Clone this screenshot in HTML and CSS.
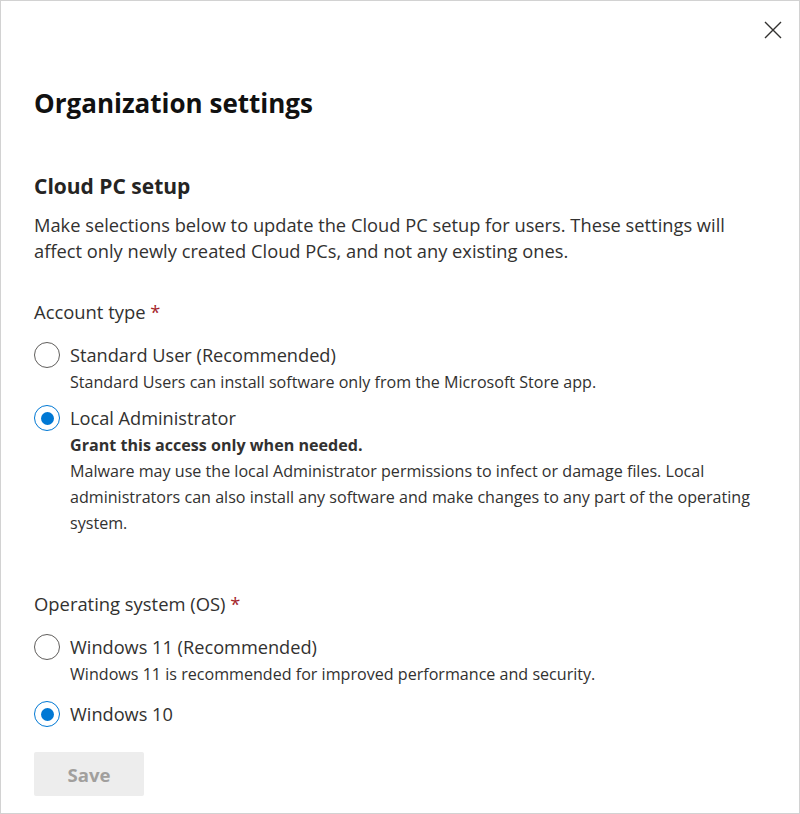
FILE: index.html
```html
<!DOCTYPE html>
<html lang="en">
<head>
<meta charset="utf-8">
<title>Organization settings</title>
<link rel="stylesheet" href="styles.css">
</head>
<body>
<div class="panel">
  <button class="close" aria-label="Close">
    <svg width="18" height="18" viewBox="0 0 18 18"><path d="M1 1 L17 17 M17 1 L1 17" stroke="#323130" stroke-width="1.4" fill="none"/></svg>
  </button>
  <h1 class="title">Organization settings</h1>
  <h2 class="section-title">Cloud PC setup</h2>
  <p class="intro">Make selections below to update the Cloud PC setup for users. These settings will affect only newly created Cloud PCs, and not any existing ones.</p>

  <div class="field field-account">
    <div class="field-label">Account type <span class="req">*</span></div>
    <div class="option">
      <span class="radio"></span>
      <span class="option-label">Standard User (Recommended)</span>
    </div>
    <div class="desc">Standard Users can install software only from the Microsoft Store app.</div>
    <div class="option option-gap">
      <span class="radio checked"></span>
      <span class="option-label">Local Administrator</span>
    </div>
    <div class="desc desc-strong">Grant this access only when needed.</div>
    <div class="desc">Malware may use the local Administrator permissions to infect or damage files. Local administrators can also install any software and make changes to any part of the operating system.</div>
  </div>

  <div class="field field-os">
    <div class="field-label">Operating system (OS) <span class="req">*</span></div>
    <div class="option">
      <span class="radio"></span>
      <span class="option-label">Windows 11 (Recommended)</span>
    </div>
    <div class="desc">Windows 11 is recommended for improved performance and security.</div>
    <div class="option option-gap-lg">
      <span class="radio checked"></span>
      <span class="option-label">Windows 10</span>
    </div>
  </div>

  <button class="save" disabled>Save</button>
</div>
</body>
</html>
```

FILE: styles.css
```css
* { box-sizing: border-box; }
html, body { margin: 0; padding: 0; background: #fff; }
body {
  font-family: "Open Sans", "Noto Sans", sans-serif;
  color: #323130;
}
.panel {
  position: relative;
  width: 800px;
  height: 814px;
  border: 1px solid #d2d2d2;
  padding: 84px 33px 0 33px;
}
.close {
  position: absolute;
  top: 19px;
  right: 16px;
  width: 20px;
  height: 20px;
  padding: 1px;
  border: 0;
  background: transparent;
  display: flex;
  align-items: center;
  justify-content: center;
}
.title {
  margin: 0;
  font-size: 26px;
  line-height: 36px;
  font-weight: 700;
  color: #111;
}
.section-title {
  margin: 51px 0 0;
  font-size: 21px;
  line-height: 28px;
  font-weight: 700;
  color: #252423;
}
.intro {
  margin: 12px 0 0;
  font-size: 18.3px;
  line-height: 26px;
  max-width: 720px;
}
.field-account { margin-top: 35px; }
.field-os { margin-top: 55px; }
.field-label {
  font-size: 18.4px;
  line-height: 26px;
}
.req { color: #a4262c; }
.option {
  display: flex;
  align-items: center;
  gap: 10px;
  margin-top: 17px;
  height: 26px;
}
.option-gap { margin-top: 10px; }
.option-gap-lg { margin-top: 14px; }
.radio {
  width: 26px;
  height: 26px;
  border-radius: 50%;
  border: 1.4px solid #605e5c;
  flex: none;
  display: flex;
  align-items: center;
  justify-content: center;
}
.radio.checked { border-color: #0078d4; }
.radio.checked::after {
  content: "";
  width: 13px;
  height: 13px;
  border-radius: 50%;
  background: #0078d4;
}
.option-label {
  font-size: 18.2px;
  line-height: 26px;
}
.desc {
  margin-left: 36px;
  margin-top: 1px;
  font-size: 16.1px;
  line-height: 26px;
  max-width: 690px;
}
.desc-strong { font-weight: 700; }
.desc-strong + .desc { margin-top: 0; }
.save {
  margin-top: 25px;
  width: 110px;
  height: 44px;
  border: 0;
  border-radius: 2px;
  background: #ededed;
  color: #a19f9d;
  font-family: inherit;
  font-size: 18.6px;
  font-weight: 700;
}
```
